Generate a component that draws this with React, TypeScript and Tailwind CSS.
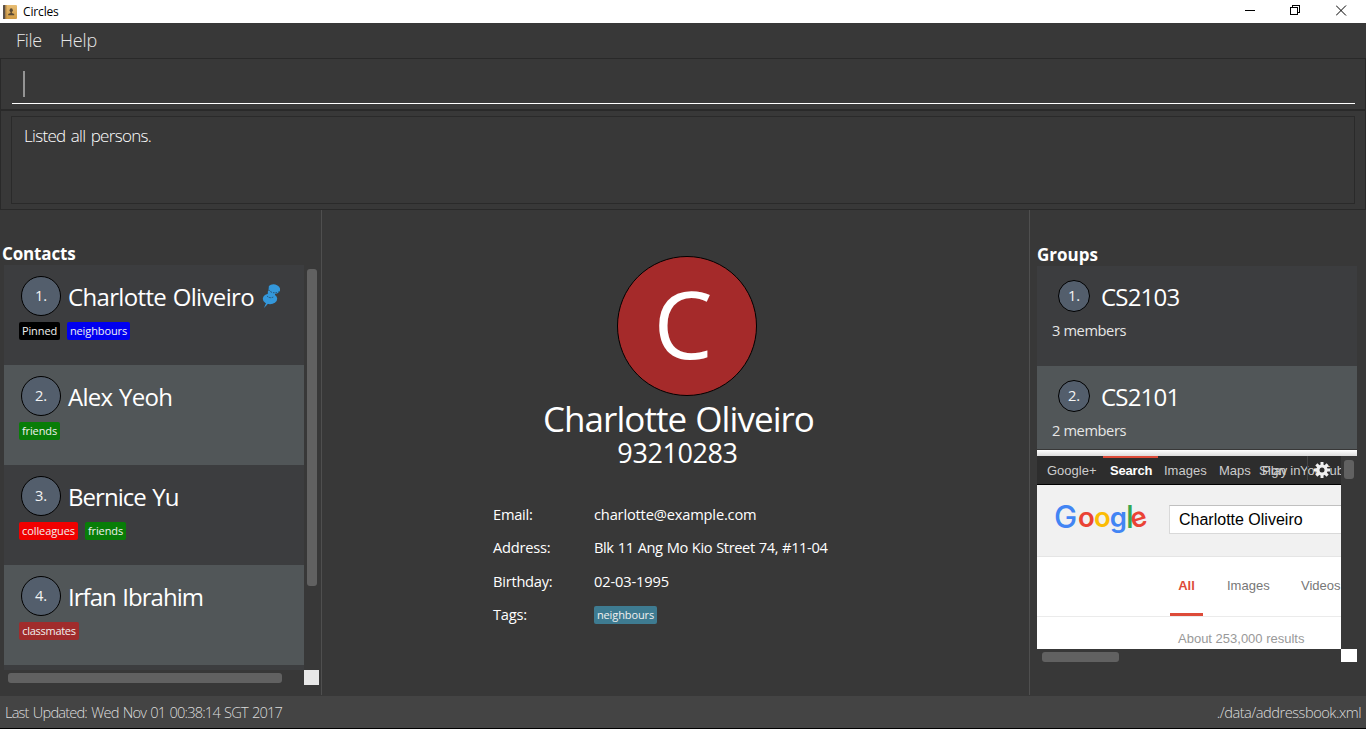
import type { ReactNode } from "react";

type TagInfo = { label: string; style: string };
type Contact = { id: number; name: string; tracking: string; pinned?: boolean; tags: TagInfo[] };

const contacts: Contact[] = [
  {
    id: 1,
    name: "Charlotte Oliveiro",
    tracking: "tracking-[-0.66px] [word-spacing:1px]",
    pinned: true,
    tags: [
      { label: "Pinned", style: "w-[41px] bg-black" },
      { label: "neighbours", style: "w-[63px] bg-[#0000f0]" },
    ],
  },
  { id: 2, name: "Alex Yeoh", tracking: "tracking-[-0.7px] [word-spacing:1px]", tags: [{ label: "friends", style: "w-[41px] bg-[#087d08]" }] },
  {
    id: 3,
    name: "Bernice Yu",
    tracking: "tracking-[-0.95px] [word-spacing:1px]",
    tags: [
      { label: "colleagues", style: "w-[59px] bg-[#f00000]" },
      { label: "friends", style: "w-[41px] bg-[#087d08]" },
    ],
  },
  { id: 4, name: "Irfan Ibrahim", tracking: "tracking-[-0.95px] [word-spacing:1px]", tags: [{ label: "classmates", style: "w-[60px] bg-[#a02c2c] tracking-[-0.3px]" }] },
];

const groups = [
  { id: 1, name: "CS2103", members: "3 members", height: "h-[100px] bg-[#3c3d3f]" },
  { id: 2, name: "CS2101", members: "2 members", height: "h-[83px] bg-[#515658]" },
];

const details = [
  { label: "Email:", value: "charlotte@example.com", tracking: "tracking-[-0.18px]" },
  { label: "Address:", value: "Blk 11 Ang Mo Kio Street 74, #11-04", tracking: "tracking-[-0.4px] [word-spacing:0.6px]" },
  { label: "Birthday:", value: "02-03-1995", tracking: "tracking-[-0.15px]" },
];

function Tag({ label, style }: TagInfo) {
  return (
    <span className={`flex h-[18px] items-center justify-center rounded-[2px] text-[11px] leading-[18px] tracking-[-0.1px] text-[#f0f0f0] ${style}`}>
      {label}
    </span>
  );
}

function PinIcon() {
  return (
    <svg className="ml-[8px] mt-[17px] h-[28px] w-[20px] shrink-0" viewBox="0 0 20 28">
      <path d="M4.6 19.5L2 26L4.6 23.3L7 20.5Z" fill="#3498db" />
      <ellipse cx="8" cy="16.8" rx="7.2" ry="5.4" fill="#3498db" />
      <path d="M6 8.5L5.6 14L12.6 15L13.4 9Z" fill="#3498db" />
      <ellipse cx="12.2" cy="7" rx="6" ry="4.6" fill="#3498db" transform="rotate(14 12.2 7)" />
      <path d="M6.6 5Q6 8.6 9.6 10.2Q13.6 11.6 17.3 9.6" fill="none" stroke="#27506e" strokeWidth="1" strokeDasharray="1.6 1" />
      <path d="M5 14Q8 17 11.8 14.8" fill="none" stroke="#27506e" strokeWidth="1" strokeDasharray="1.6 1" />
    </svg>
  );
}

function TitleBar() {
  return (
    <header className="flex h-[23px] items-center bg-white text-black">
      <svg className="ml-[3px] h-[14px] w-[14px]" viewBox="0 0 14 14">
        <defs>
          <linearGradient id="cover" x1="0" y1="0" x2="0" y2="1">
            <stop offset="0" stopColor="#e8bd74" />
            <stop offset="1" stopColor="#cf9a44" />
          </linearGradient>
        </defs>
        <rect width="14" height="14" rx="1" fill="url(#cover)" />
        <rect width="2.5" height="14" rx="0.5" fill="#5a5048" />
        <rect x="2.5" width="1" height="14" fill="#b98a45" />
        <ellipse cx="8.2" cy="5.2" rx="1.6" ry="1.9" fill="#5a4a35" />
        <path d="M7.5 6.5h1.4v1.6l2.3 1v1.2H5.2V9.1l2.3-1z" fill="#5a4a35" />
      </svg>
      <span className="ml-[6px] text-[12px] leading-[23px] tracking-[-0.15px]">Circles</span>
      <div className="ml-auto mr-[19px] flex h-[23px] items-start pt-[5px]">
        <svg className="mr-[35px] h-[11px] w-[10px]" viewBox="0 0 10 11" shapeRendering="crispEdges">
          <path d="M0 5h10v1H0z" fill="#000" />
        </svg>
        <svg className="mr-[36px] h-[11px] w-[10px]" viewBox="0 0 10 11" fill="none" stroke="#000" shapeRendering="crispEdges">
          <rect x="0.5" y="2.5" width="7" height="7" />
          <path d="M2.5 2.5v-2h7v7h-2" />
        </svg>
        <svg className="h-[11px] w-[11px]" viewBox="0 0 11 11" stroke="#000">
          <path d="M0 0.5l10 10M10 0.5l-10 10" />
        </svg>
      </div>
    </header>
  );
}

function ContactsPanel() {
  return (
    <section className="flex w-[321px] flex-col pl-[4px] pt-[34px]">
      <h2 className="-ml-[2px] h-[21px] text-[17px] font-bold leading-[19px] tracking-[-0.15px] text-white">Contacts</h2>
      <div className="flex h-[405px]">
        <div className="flex h-[405px] w-[300px] flex-col overflow-hidden bg-[#3c3d3f]">
          {contacts.map((c) => (
            <article key={c.id} className={`h-[100px] shrink-0 ${c.id % 2 ? "bg-[#3c3d3f]" : "bg-[#515658]"}`}>
              <div className="flex h-[57px] items-start pl-[17px]">
                <Index size="mt-[11px] h-[40px] w-[40px]">{c.id}.</Index>
                <span className={`ml-[7px] mt-[14px] whitespace-nowrap text-[24px] leading-[36px] text-white ${c.tracking}`}>{c.name}</span>
                {c.pinned && <PinIcon />}
              </div>
              <div className="flex gap-[7px] pl-[15px]">
                {c.tags.map((t) => (
                  <Tag key={t.label} {...t} />
                ))}
              </div>
            </article>
          ))}
        </div>
        <div className="ml-[3px] mt-[4px] h-[317px] w-[10px] rounded-[3px] bg-[#616161]" />
      </div>
      <div className="flex h-[15px] w-[315px] justify-between">
        <div className="ml-[4px] mt-[3px] h-[10px] w-[274px] rounded-[3px] bg-[#616161]" />
        <div className="h-[15px] w-[15px] bg-[#e8e8e8]" />
      </div>
    </section>
  );
}

function Index({ size, children }: { size: string; children: ReactNode }) {
  return (
    <div className={`flex shrink-0 items-center justify-center rounded-full border border-black bg-[#535e6c] text-[14.67px] leading-none text-[#f4f4f4] ${size}`}>
      <span className="pb-px">{children}</span>
    </div>
  );
}

function ProfilePanel() {
  return (
    <section className="flex w-[707px] flex-col items-center pt-[46px] text-white">
      <div className="ml-[23px] flex h-[140px] w-[140px] items-center justify-center rounded-full border border-black bg-[#a52a2a]">
        <span className="-ml-[8px] -mt-[6px] text-[94px] leading-[138px]">C</span>
      </div>
      <div className="mt-[6px] h-[33px] pl-[6px] text-[35px] leading-[33px] tracking-[-0.95px] [word-spacing:1px]">Charlotte Oliveiro</div>
      <div className="mt-[2px] h-[31px] pl-[4px] text-[27px] leading-[31px] tracking-[-0.4px]">93210283</div>
      <dl className="mt-[30px] grid w-[365px] grid-cols-[101px_1fr] text-[14.67px] font-[450] leading-[33.4px]">
        {details.map((d) => (
          <div key={d.label} className="contents">
            <dt className="tracking-[-0.25px]">{d.label}</dt>
            <dd className={`whitespace-nowrap ${d.tracking}`}>{d.value}</dd>
          </div>
        ))}
        <dt className="tracking-[-0.25px]">Tags:</dt>
        <dd className="flex items-center font-normal">
          <Tag label="neighbours" style="w-[63px] bg-[#3e7b91]" />
        </dd>
      </dl>
    </section>
  );
}

function WebView() {
  return (
    <div className="flex h-[206px] w-[320px] flex-col font-['Liberation_Sans',Arial,sans-serif]">
      <div className="flex h-[193px]">
        <div className="flex w-[304px] flex-col overflow-hidden bg-white">
          <nav className="relative flex h-[29px] shrink-0 border-b border-black bg-[#2d2d2d] pl-[5px] text-[13px] leading-[30px] text-[#cccccc]">
            <span className="w-[61px] shrink-0 pl-[5px]">Google+</span>
            <span className="w-[55px] shrink-0 border-t-2 border-[#dd4b39] pl-[7px] font-bold leading-[26px] tracking-[-0.2px] text-white">Search</span>
            <span className="w-[55px] shrink-0 pl-[6px]">Images</span>
            <span className="w-[44px] shrink-0 pl-[6px]">Maps</span>
            <span className="w-[37px] shrink-0 pl-[5px]">Play</span>
            <span className="shrink-0 pl-[6px]">YouTube</span>
            <span className="absolute left-[222px] top-0 tracking-[0.3px]">Sign in</span>
            <span className="absolute left-[270px] top-0 h-[24px] w-px bg-[#454545]" />
            <svg className="absolute left-[276px] top-[5px] h-[18px] w-[18px]" viewBox="-9 -9 18 18">
              <g fill="#f0f0f0">
                {[0, 45, 90, 135].map((a) => (
                  <rect key={a} x="-1.5" y="-8" width="3" height="16" transform={`rotate(${a})`} />
                ))}
                <circle r="5.6" />
              </g>
              <circle r="2.5" fill="#2d2d2d" />
            </svg>
          </nav>
          <div className="flex h-[72px] shrink-0 border-b border-[#e5e5e5] bg-[#f1f1f1]">
            <div className="ml-[17px] mt-[12px] flex h-[40px] w-[115px] shrink-0 font-['Inter',sans-serif] text-[27.5px] font-semibold leading-[41px]">
              <span className="w-[24px] text-[31px] font-medium leading-[39px] text-[#4285f4]">G</span>
              <span className="w-[16px] text-[#ea4335]">o</span>
              <span className="w-[15.8px] text-[#fbbc05]">o</span>
              <span className="w-[16.2px] text-[#4285f4]">g</span>
              <span className="w-[4px] text-[31px] font-medium leading-[39px] text-[#34a853]">l</span>
              <span className="ml-[0.5px] -rotate-[16deg] text-[#ea4335]">e</span>
            </div>
            <div className="mt-[20px] h-[29px] w-[240px] shrink-0 border border-[#d9d9d9] border-t-[#c0c0c0] bg-white pl-[9px] text-[16px] leading-[27px] text-black">
              Charlotte Oliveiro
            </div>
          </div>
          <div className="flex h-[60px] shrink-0 border-b border-[#ebebeb] pl-[133px] text-[13px] leading-[57px] text-[#777777]">
            <span className="w-[33px] shrink-0 border-b-[3px] border-[#dd4b39] text-center font-bold text-[#dd4b39]">All</span>
            <span className="w-[74px] shrink-0 pl-[24px]">Images</span>
            <span className="shrink-0 pl-[24px]">Videos</span>
          </div>
          <div className="pl-[141px] text-[13px] leading-[44px] text-[#999999]">About 253,000 results</div>
        </div>
        <div className="ml-[3px] mt-[4px] h-[19px] w-[10px] rounded-[3px] bg-[#616161]" />
      </div>
      <div className="flex h-[13px] justify-between">
        <div className="ml-[5px] mt-[3px] h-[10px] w-[77px] rounded-[3px] bg-[#616161]" />
        <div className="h-[13px] w-[16px] bg-white" />
      </div>
    </div>
  );
}

function GroupsPanel() {
  return (
    <section className="flex flex-1 flex-col pl-[7px] pt-[35px]">
      <h2 className="h-[21px] text-[17px] font-bold leading-[19px] text-white">Groups</h2>
      {groups.map((g) => (
        <article key={g.id} className={`w-[320px] ${g.height}`}>
          <div className="flex h-[54px] items-start pl-[21px]">
            <Index size="mt-[14px] h-[32px] w-[32px]">{g.id}.</Index>
            <span className="ml-[11px] mt-[13px] text-[24px] leading-[36px] tracking-[-0.8px] text-white">{g.name}</span>
          </div>
          <div className="pl-[15px] text-[14.67px] leading-[20px] tracking-[-0.4px] text-[#e6e6e6]">{g.members}</div>
        </article>
      ))}
      <div className="mt-px h-[6px] w-[320px] bg-linear-to-b from-white to-[#dcdcdc]" />
      <WebView />
    </section>
  );
}

export default function App() {
  return (
    <div className="flex h-[729px] w-[1366px] flex-col overflow-hidden bg-[#383838] font-['Open_Sans','Noto_Sans',sans-serif]">
      <TitleBar />
      <nav className="flex h-[35px] gap-[18px] pl-[16px] text-[18px] font-light leading-[35px] text-[#e6e6e6]">
        <span className="tracking-[-0.3px]">File</span>
        <span className="tracking-[-0.1px]">Help</span>
      </nav>
      <div className="h-[52px] border border-[#292929] pb-[5px] pl-[11px] pr-[10px]">
        <div className="h-[45px] border-b border-white pl-[11px] pt-[12px]">
          <div className="h-[26px] w-[2px] bg-[#949494]" />
        </div>
      </div>
      <div className="h-[100px] border border-[#292929] px-[10px] py-[5px]">
        <div className="h-[88px] border border-[#2a2a2a] pl-[12px] text-[17px] font-light leading-[38px] tracking-[-0.68px] text-white [word-spacing:1.5px]">Listed all persons.</div>
      </div>
      <main className="flex h-[486px]">
        <ContactsPanel />
        <div className="h-[485px] w-px bg-[#4f4f4f]" />
        <ProfilePanel />
        <div className="h-[485px] w-px bg-[#4f4f4f]" />
        <GroupsPanel />
      </main>
      <footer className="flex h-[33px] justify-between border-b border-black bg-[#444444] px-[5px] text-[14.67px] font-light leading-[33px] text-[#dcdcdc]">
        <span className="tracking-[-0.84px] [word-spacing:1.2px]">Last Updated: Wed Nov 01 00:38:14 SGT 2017</span>
        <span className="tracking-[-0.5px]">./data/addressbook.xml</span>
      </footer>
    </div>
  );
}
